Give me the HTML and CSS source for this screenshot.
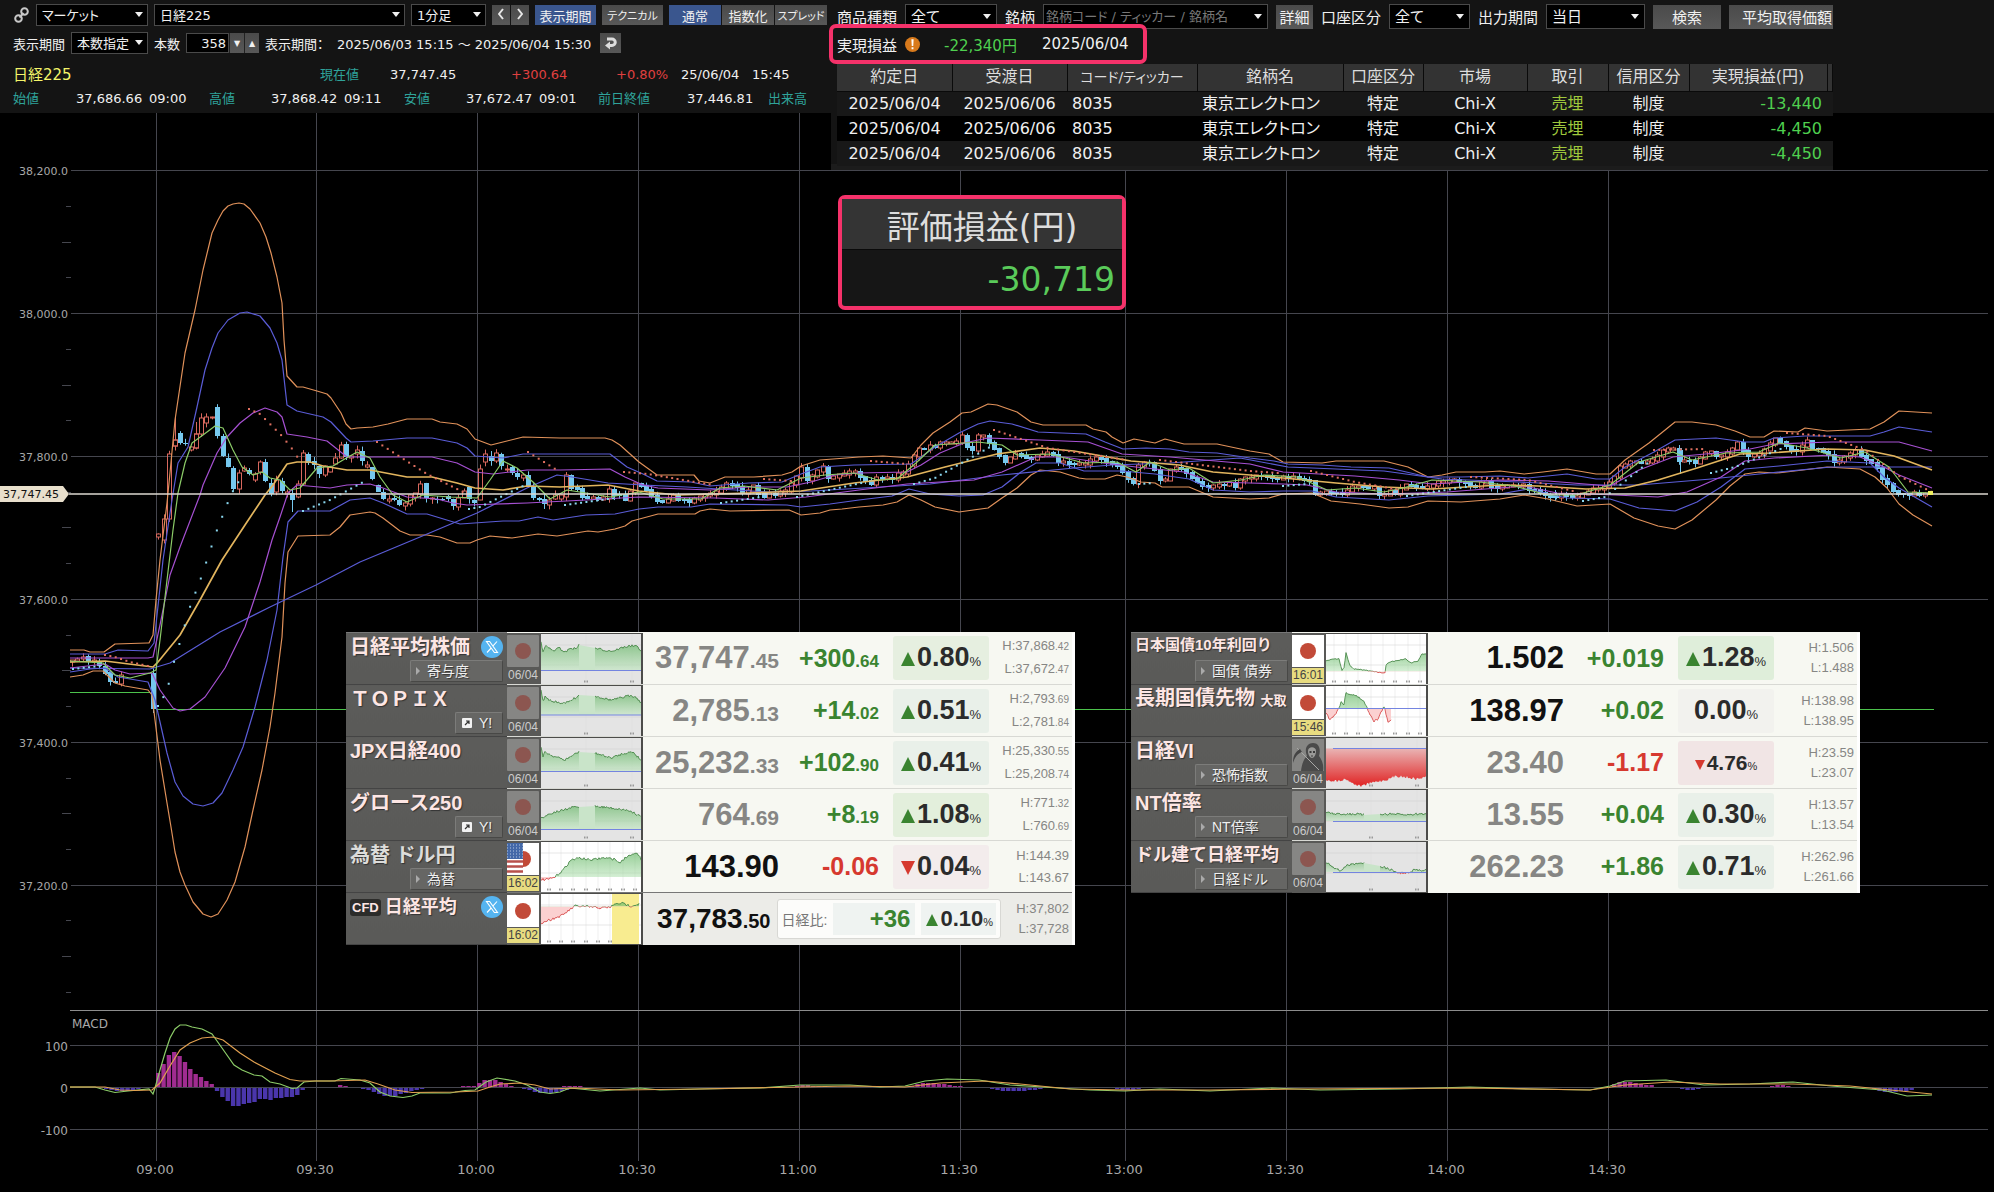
FILE: index.html
```html
<!DOCTYPE html>
<html lang="ja">

<head>
    <meta charset="UTF-8">
    <title>日経225</title>
    <link rel="stylesheet" href="styles.css">
</head>

<body>
    <header class="header">
        <form class="bar bar-top">
            <svg class="link-icon" viewBox="0 0 16 16">
                <circle cx="10.5" cy="4.5" r="3.3" />
                <circle cx="4.5" cy="11.5" r="3.3" />
                <path d="M9.5 6 L5.5 10.5" />
            </svg>
            <span class="pick pick-market"><select aria-label="種別"><option>マーケット</option></select></span>
            <span class="pick pick-symbol"><select aria-label="銘柄"><option>日経225</option></select></span>
            <span class="pick pick-foot"><select aria-label="足種"><option>1分足</option></select></span>
            <div class="group">
                <button type="button" class="btn btn-step" aria-label="前へ"><svg viewBox="0 0 6 12"><path d="M5 1 L1 6 L5 11" /></svg></button>
                <button type="button" class="btn btn-step" aria-label="次へ"><svg viewBox="0 0 6 12"><path d="M1 1 L5 6 L1 11" /></svg></button>
            </div>
            <button type="button" class="btn btn-wide active">表示期間</button>
            <button type="button" class="btn btn-wide kana">テクニカル</button>
            <div class="group">
                <button type="button" class="btn btn-tab active">通常</button>
                <button type="button" class="btn btn-tab">指数化</button>
                <button type="button" class="btn btn-tab kana">スプレッド</button>
            </div>
        </form>

        <form class="bar bar-period">
            <label for="mode">表示期間</label>
            <span class="pick pick-mode"><select id="mode"><option>本数指定</option></select></span>
            <label for="count">本数</label>
            <div class="group spin">
                <input type="text" id="count" value="358">
                <button type="button" class="btn" aria-label="減らす">▼</button>
                <button type="button" class="btn" aria-label="増やす">▲</button>
            </div>
            <span class="period-label">表示期間：</span>
            <span class="period">2025/06/03 15:15 ～ 2025/06/04 15:30</span>
            <button type="button" class="btn btn-reset" aria-label="戻す"><svg viewBox="0 0 14 14"><path d="M3 3 H8 A3.2 3.2 0 0 1 8 9.5 H5" /><path class="head" d="M6 5.5 V13.5 L1 9.5 Z" /></svg></button>
        </form>

        <div class="quote-now">
            <span class="symbol">日経225</span>
            <span class="label">現在値</span>
            <span>37,747.45</span>
            <span class="up">+300.64</span>
            <span class="up">+0.80%</span>
            <span>25/06/04</span>
            <span>15:45</span>
        </div>
        <div class="quote-day">
            <span class="label">始値</span>
            <span>37,686.66</span>
            <span>09:00</span>
            <span class="label">高値</span>
            <span>37,868.42</span>
            <span>09:11</span>
            <span class="label">安値</span>
            <span>37,672.47</span>
            <span>09:01</span>
            <span class="label">前日終値</span>
            <span>37,446.81</span>
            <span class="label">出来高</span>
        </div>
    </header>

    <section class="trades">
        <form class="filters">
            <label for="kind">商品種類</label>
            <span class="pick pick-kind"><select id="kind"><option>全て</option></select></span>
            <label for="code">銘柄</label>
            <span class="pick pick-code"><input type="text" id="code" placeholder="銘柄コード / ティッカー / 銘柄名"></span>
            <button type="button" class="btn btn-detail">詳細</button>
            <label for="account">口座区分</label>
            <span class="pick pick-account"><select id="account"><option>全て</option></select></span>
            <label for="range">出力期間</label>
            <span class="pick pick-range"><select id="range"><option>当日</option></select></span>
            <button type="button" class="btn btn-search">検索</button>
            <button type="button" class="btn btn-average">平均取得価額</button>
        </form>

        <div class="realized">
            <span>実現損益</span>
            <svg class="warn" viewBox="0 0 16 16">
                <circle cx="8" cy="8" r="8" fill="#d87a1c" />
                <path d="M6.8 2.5 H9.2 L8.8 9.5 H7.2 Z M7 11 H9 V13 H7 Z" fill="#fff" />
            </svg>
            <span class="minus">-22,340円</span>
            <span>2025/06/04</span>
        </div>

        <table class="deals">
            <colgroup>
                <col class="c-date"><col class="c-date"><col class="c-code"><col class="c-name"><col class="c-account"><col class="c-market"><col class="c-side"><col class="c-credit"><col class="c-profit"><col class="c-rest">
            </colgroup>
            <thead>
                <tr>
                    <th>約定日</th>
                    <th>受渡日</th>
                    <th class="kana">コード/ティッカー</th>
                    <th>銘柄名</th>
                    <th>口座区分</th>
                    <th>市場</th>
                    <th>取引</th>
                    <th>信用区分</th>
                    <th>実現損益(円)</th>
                    <th></th>
                </tr>
            </thead>
            <tbody>
                <tr>
                    <td>2025/06/04</td>
                    <td>2025/06/06</td>
                    <td class="code">8035</td>
                    <td class="name">東京エレクトロン</td>
                    <td>特定</td>
                    <td>Chi-X</td>
                    <td class="side">売埋</td>
                    <td>制度</td>
                    <td class="profit">-13,440</td>
                    <td></td>
                </tr>
                <tr>
                    <td>2025/06/04</td>
                    <td>2025/06/06</td>
                    <td class="code">8035</td>
                    <td class="name">東京エレクトロン</td>
                    <td>特定</td>
                    <td>Chi-X</td>
                    <td class="side">売埋</td>
                    <td>制度</td>
                    <td class="profit">-4,450</td>
                    <td></td>
                </tr>
                <tr>
                    <td>2025/06/04</td>
                    <td>2025/06/06</td>
                    <td class="code">8035</td>
                    <td class="name">東京エレクトロン</td>
                    <td>特定</td>
                    <td>Chi-X</td>
                    <td class="side">売埋</td>
                    <td>制度</td>
                    <td class="profit">-4,450</td>
                    <td></td>
                </tr>
            </tbody>
        </table>
    </section>

    <main class="chart">
        <svg id="chart" viewBox="0 113 1994 1079"></svg>

        <div class="valuation">
            <div class="valuation-title">評価損益(円)</div>
            <div class="valuation-value">-30,719</div>
        </div>

        <table class="board board-left">
            <colgroup>
                <col class="b-name"><col class="b-flag"><col class="b-spark"><col class="b-price"><col class="b-diff"><col class="b-rate"><col class="b-range">
            </colgroup>
            <tr>
                <th>
                    <div class="title"><span>日経平均株価</span><svg class="x-icon" viewBox="0 0 22 22"><use href="#x-mark" /></svg></div>
                    <a href="#" class="more">寄与度</a>
                </th>
                <td class="flag old"><svg viewBox="0 0 32 32"><use href="#jp-old" /></svg><span>06/04</span></td>
                <td class="spark"><svg data-spark="nikkei" viewBox="0 0 100 50"></svg></td>
                <td class="price old">37,747<small>.45</small></td>
                <td class="diff plus">+300<small>.64</small></td>
                <td class="rate"><span class="box g2"><i class="tri-up"></i>0.80<small>%</small></span></td>
                <td class="range">H:37,868<small>.42</small><br>L:37,672<small>.47</small></td>
            </tr>
            <tr>
                <th>
                    <div class="title"><span>ＴＯＰＩＸ</span></div>
                    <a href="#" class="more ext"><svg viewBox="0 0 10 10"><use href="#ext" /></svg>Y!</a>
                </th>
                <td class="flag old"><svg viewBox="0 0 32 32"><use href="#jp-old" /></svg><span>06/04</span></td>
                <td class="spark"><svg data-spark="topix" viewBox="0 0 100 50"></svg></td>
                <td class="price old">2,785<small>.13</small></td>
                <td class="diff plus">+14<small>.02</small></td>
                <td class="rate"><span class="box g1"><i class="tri-up"></i>0.51<small>%</small></span></td>
                <td class="range">H:2,793<small>.69</small><br>L:2,781<small>.84</small></td>
            </tr>
            <tr>
                <th>
                    <div class="title"><span>JPX日経400</span></div>
                </th>
                <td class="flag old"><svg viewBox="0 0 32 32"><use href="#jp-old" /></svg><span>06/04</span></td>
                <td class="spark"><svg data-spark="jpx" viewBox="0 0 100 50"></svg></td>
                <td class="price old">25,232<small>.33</small></td>
                <td class="diff plus">+102<small>.90</small></td>
                <td class="rate"><span class="box g1"><i class="tri-up"></i>0.41<small>%</small></span></td>
                <td class="range">H:25,330<small>.55</small><br>L:25,208<small>.74</small></td>
            </tr>
            <tr>
                <th>
                    <div class="title"><span>グロース250</span></div>
                    <a href="#" class="more ext"><svg viewBox="0 0 10 10"><use href="#ext" /></svg>Y!</a>
                </th>
                <td class="flag old"><svg viewBox="0 0 32 32"><use href="#jp-old" /></svg><span>06/04</span></td>
                <td class="spark"><svg data-spark="growth" viewBox="0 0 100 50"></svg></td>
                <td class="price old">764<small>.69</small></td>
                <td class="diff plus">+8<small>.19</small></td>
                <td class="rate"><span class="box g3"><i class="tri-up"></i>1.08<small>%</small></span></td>
                <td class="range">H:771<small>.32</small><br>L:760<small>.69</small></td>
            </tr>
            <tr class="split">
                <th>
                    <div class="title plain"><span>為替 ドル円</span></div>
                    <a href="#" class="more">為替</a>
                </th>
                <td class="flag live"><svg viewBox="0 0 32 32"><use href="#jp" /><use href="#us" /></svg><span>16:02</span></td>
                <td class="spark"><svg data-spark="usdjpy" viewBox="0 0 100 50"></svg></td>
                <td class="price">143.90</td>
                <td class="diff minus">-0.06</td>
                <td class="rate"><span class="box r1"><i class="tri-down"></i>0.04<small>%</small></span></td>
                <td class="range">H:144.39<br>L:143.67</td>
            </tr>
            <tr class="cfd">
                <th>
                    <div class="title mid"><b class="badge">CFD</b><span>日経平均</span><svg class="x-icon" viewBox="0 0 22 22"><use href="#x-mark" /></svg></div>
                </th>
                <td class="flag live"><svg viewBox="0 0 32 32"><use href="#jp" /></svg><span>16:02</span></td>
                <td class="spark"><svg data-spark="cfd" viewBox="0 0 100 50"></svg></td>
                <td colspan="3">
                    <div class="cfd-line">
                        <span class="price">37,783<small>.50</small></span>
                        <div class="compare">
                            <span class="compare-label">日経比:</span>
                            <span class="compare-diff">+36</span>
                            <span class="compare-rate"><i class="tri-up"></i>0.10<small>%</small></span>
                        </div>
                    </div>
                </td>
                <td class="range tight">H:37,802<br>L:37,728</td>
            </tr>
        </table>

        <table class="board board-right">
            <colgroup>
                <col class="b-name"><col class="b-flag"><col class="b-spark"><col class="b-price"><col class="b-diff"><col class="b-rate"><col class="b-range">
            </colgroup>
            <tr>
                <th>
                    <div class="title small"><span>日本国債10年利回り</span></div>
                    <a href="#" class="more">国債 債券</a>
                </th>
                <td class="flag live"><svg viewBox="0 0 32 32"><use href="#jp" /></svg><span>16:01</span></td>
                <td class="spark"><svg data-spark="jgb" viewBox="0 0 100 50"></svg></td>
                <td class="price">1.502</td>
                <td class="diff plus">+0.019</td>
                <td class="rate"><span class="box g4"><i class="tri-up"></i>1.28<small>%</small></span></td>
                <td class="range tight">H:1.506<br>L:1.488</td>
            </tr>
            <tr>
                <th>
                    <div class="title"><span>長期国債先物 <small>大取</small></span></div>
                </th>
                <td class="flag live"><svg viewBox="0 0 32 32"><use href="#jp" /></svg><span>15:46</span></td>
                <td class="spark"><svg data-spark="future" viewBox="0 0 100 50"></svg></td>
                <td class="price">138.97</td>
                <td class="diff plus">+0.02</td>
                <td class="rate"><span class="box">0.00<small>%</small></span></td>
                <td class="range tight">H:138.98<br>L:138.95</td>
            </tr>
            <tr>
                <th>
                    <div class="title"><span>日経VI</span></div>
                    <a href="#" class="more">恐怖指数</a>
                </th>
                <td class="flag old"><svg viewBox="0 0 32 32"><use href="#reaper" /></svg><span>06/04</span></td>
                <td class="spark"><svg data-spark="vi" viewBox="0 0 100 50"></svg></td>
                <td class="price old">23.40</td>
                <td class="diff minus">-1.17</td>
                <td class="rate"><span class="box r2 low"><i class="tri-down"></i>4.76<small>%</small></span></td>
                <td class="range tight">H:23.59<br>L:23.07</td>
            </tr>
            <tr>
                <th>
                    <div class="title"><span>NT倍率</span></div>
                    <a href="#" class="more">NT倍率</a>
                </th>
                <td class="flag old"><svg viewBox="0 0 32 32"><use href="#jp-old" /></svg><span>06/04</span></td>
                <td class="spark"><svg data-spark="nt" viewBox="0 0 100 50"></svg></td>
                <td class="price old">13.55</td>
                <td class="diff plus">+0.04</td>
                <td class="rate"><span class="box g1"><i class="tri-up"></i>0.30<small>%</small></span></td>
                <td class="range tight">H:13.57<br>L:13.54</td>
            </tr>
            <tr>
                <th>
                    <div class="title mid"><span>ドル建て日経平均</span></div>
                    <a href="#" class="more">日経ドル</a>
                </th>
                <td class="flag old"><svg viewBox="0 0 32 32"><use href="#jp-old" /></svg><span>06/04</span></td>
                <td class="spark"><svg data-spark="dollar" viewBox="0 0 100 50"></svg></td>
                <td class="price old">262.23</td>
                <td class="diff plus">+1.86</td>
                <td class="rate"><span class="box g1"><i class="tri-up"></i>0.71<small>%</small></span></td>
                <td class="range tight">H:262.96<br>L:261.66</td>
            </tr>
        </table>
    </main>

    <svg class="symbols">
        <defs>
            <linearGradient id="fill-up" x1="0" y1="0" x2="0" y2="1">
                <stop offset="0" stop-color="#5fb45f" stop-opacity="0.8" />
                <stop offset="1" stop-color="#bfe8bf" stop-opacity="0.7" />
            </linearGradient>
            <linearGradient id="fill-vi" x1="0" y1="0" x2="0" y2="1">
                <stop offset="0" stop-color="#e9b4b4" />
                <stop offset="1" stop-color="#e02020" />
            </linearGradient>
            <symbol id="jp" viewBox="0 0 32 32">
                <rect width="32" height="32" fill="#fff" />
                <circle cx="16" cy="16" r="8" fill="#c24a38" />
            </symbol>
            <symbol id="jp-old" viewBox="0 0 32 32">
                <rect width="32" height="32" rx="1" fill="#868684" />
                <circle cx="16" cy="16" r="8" fill="#8c5650" />
            </symbol>
            <symbol id="us" viewBox="0 0 32 32">
                <rect width="16" height="32" fill="#fff" />
                <path d="M0 18.5 H16 M0 23.5 H16 M0 28.5 H16" stroke="#b8504c" stroke-width="2.5" />
                <rect width="16" height="16" fill="#4368a8" />
                <path d="M0 2 H16 M0 5 H16 M0 8 H16 M0 11 H16 M0 14 H16" stroke="#b8c8e0" stroke-width="1" stroke-dasharray="1 2" />
            </symbol>
            <symbol id="reaper" viewBox="0 0 32 32">
                <rect width="32" height="32" fill="#868684" />
                <path d="M9 32 C10 24 12 20 15 17 C12 10 15 4 21 4 C27 4 29 10 27 17 C30 21 32 26 31 32 Z" fill="#4a4a4a" />
                <path d="M16 12 C16 7 24 7 24 12 C24 16 22 19 20 19 C18 19 16 16 16 12 Z" fill="#9a9a98" />
                <path d="M17.5 12 h2 v2 h-2 z M21 12 h2 v2 h-2 z M19 16.5 h2 v1 h-2 z" fill="#3a3a3a" />
                <path d="M5 9 L27 31" stroke="#a8a8a6" stroke-width="1" />
                <path d="M8 10 C3 13 1 17 1 24 C3 18 5 15 10 13 Z" fill="#444" />
            </symbol>
            <symbol id="x-mark" viewBox="0 0 22 22">
                <circle cx="11" cy="11" r="11" fill="#55b4f0" />
                <path d="M5.5 5.5 H8.6 L16.5 16.5 H13.4 Z M16 5.5 L11.8 10.2 M10.2 12 L6 16.5" fill="none" stroke="#fff" stroke-width="1.1" />
            </symbol>
            <symbol id="ext" viewBox="0 0 10 10">
                <rect width="10" height="10" rx="1" fill="#f2f2f2" />
                <path d="M3 7 L7 3 M4 3 H7 V6" fill="none" stroke="#333" stroke-width="1.2" />
            </symbol>
        </defs>
    </svg>

    <script src="script.js"></script>
</body>

</html>
```

FILE: styles.css
```css
* {
    box-sizing: border-box;
}

body {
    margin: 0;
    background-color: #000;
    color: #f0f0f0;
    font-family: "DejaVu Sans", "Noto Sans CJK JP", sans-serif;
    font-size: 13px;
    font-feature-settings: "palt";
    position: relative;
    overflow-x: hidden;
}

button,
input,
select {
    font: inherit;
    font-feature-settings: inherit;
    color: inherit;
    margin: 0;
    padding: 0;
    border: 0;
    border-radius: 0;
    outline: none;
}

.symbols {
    position: absolute;
    width: 0;
    height: 0;
}

/* header */

.header {
    background-color: #141414;
    padding: 4px 0 2px;
}

.bar {
    display: flex;
    align-items: center;
    gap: 6px;
    height: 22px;
    white-space: nowrap;
}

.bar-top {
    padding-left: 14px;
    margin-bottom: 6px;
}

.bar-period {
    padding-left: 13px;
    margin-bottom: 9px;
}

.link-icon {
    width: 16px;
    height: 16px;
    fill: none;
    stroke: #c8c8c8;
    stroke-width: 2;
}

.pick {
    position: relative;
    display: block;
    height: 22px;
}

.pick select,
.pick input {
    display: block;
    width: 100%;
    height: 100%;
    appearance: none;
    background-color: #000;
    border: 1px solid #4a4a4a;
    padding-left: 5px;
}

.pick::after {
    content: "";
    position: absolute;
    right: 5px;
    top: 50%;
    margin-top: -3px;
    border: 4px solid transparent;
    border-top: 5px solid #f0f0f0;
    border-bottom: 0;
}

.pick-market { width: 112px; }
.pick-symbol { width: 251px; }
.pick-foot { width: 75px; }
.pick-mode { width: 77px; }

.group {
    display: flex;
    gap: 1px;
}

.btn {
    height: 20px;
    background: linear-gradient(#4a4a4a, #585858);
    text-align: center;
    white-space: nowrap;
}

.btn.active {
    background: #3a568e;
}

.btn.kana {
    font-size: 11px;
}

.btn-step {
    width: 18px;
}

.btn-step svg {
    width: 6px;
    height: 12px;
    fill: none;
    stroke: #e8e8e8;
    stroke-width: 2;
}

.btn-wide { width: 61px; }
.btn-tab { width: 52px; }

.spin {
    gap: 0;
}

.spin input {
    width: 43px;
    height: 20px;
    background-color: #000;
    border: 1px solid #4a4a4a;
    text-align: right;
    padding-right: 2px;
}

.spin .btn {
    width: 15px;
    font-size: 8px;
    border-left: 1px solid #222;
}

.period-label {
    width: 66px;
}

.period {
    width: 257px;
}

.btn-reset {
    width: 21px;
}

.btn-reset svg {
    width: 14px;
    height: 14px;
    display: block;
    margin: 0 auto;
    fill: none;
    stroke: #ddd;
    stroke-width: 3;
}

.btn-reset .head {
    fill: #ddd;
    stroke: none;
}

.quote-now,
.quote-day {
    display: grid;
    padding-left: 13px;
    height: 24px;
    line-height: 24px;
    white-space: nowrap;
}

.quote-now {
    grid-template-columns: 307px 70px 121px 105px 65px 71px 1fr;
}

.quote-day {
    grid-template-columns: 63px 73px 60px 62px 73px 60px 62px 73px 59px 89px 81px 1fr;
}

.symbol {
    color: #f5f56a;
    font-size: 15px;
}

.label {
    color: #2fa39a;
}

.up {
    color: #e04040;
}

/* realized trades */

.trades {
    position: absolute;
    left: 831px;
    top: 0;
    z-index: 1;
    width: 1002px;
    height: 170px;
    background-color: #1c1c1c;
    background-image: linear-gradient(#141414, #141414);
    background-size: 100% 164px;
    background-repeat: no-repeat;
    padding: 4px 0 0 6px;
    font-size: 15px;
}

.filters {
    display: flex;
    align-items: center;
    gap: 8px;
    height: 25px;
    overflow: hidden;
    white-space: nowrap;
}

.filters label {
    flex: none;
}

.filters .pick {
    height: 25px;
    flex: none;
}

.filters .pick::after {
    right: 6px;
}

.filters .btn {
    height: 24px;
    flex: none;
}

.filters input::placeholder {
    color: #777;
    opacity: 1;
}

.filters .pick-code input {
    padding-left: 2px;
    font-size: 13px;
}

.pick-kind { width: 92px; }
.pick-code { width: 225px; }
.pick-account { width: 81px; }
.pick-range { width: 99px; }
.btn-detail { width: 37px; }
.btn-search { width: 68px; }

.filters .btn-average {
    width: 116px;
}

.realized {
    position: relative;
    z-index: 2;
    display: flex;
    align-items: center;
    width: 318px;
    height: 40px;
    margin: -5px 0 0 -8px;
    padding-left: 4px;
    border: 4px solid #f5326a;
    border-radius: 7px;
    background-color: #141414;
    white-space: nowrap;
}

.warn {
    width: 15px;
    height: 15px;
    margin: 0 24px 0 8px;
}

.realized .minus {
    width: 98px;
}

.minus,
.profit {
    color: #4fd04f;
}

.deals {
    table-layout: fixed;
    width: 100%;
    border-collapse: collapse;
    font-size: 16px;
    line-height: 24px;
    white-space: nowrap;
}

.c-date { width: 115px; }
.c-code { width: 130px; }
.c-name { width: 146px; }
.c-account { width: 80px; }
.c-market { width: 104px; }
.c-side { width: 81px; }
.c-credit { width: 81px; }
.c-profit { width: 138px; }

.deals th {
    height: 27px;
    padding: 0;
    font-weight: normal;
    color: #ddd;
    background-color: #333;
    border-right: 1px solid #0a0a0a;
    border-bottom: 1px solid #0a0a0a;
}

.deals .kana {
    font-size: 14px;
}

.deals td {
    height: 25px;
    padding: 0;
    text-align: center;
    background-color: #181818;
}

.deals tr:nth-child(2) td {
    background-color: #000;
}

.deals .code,
.deals .name {
    text-align: left;
    padding-left: 5px;
}

.deals .side {
    color: #9fc83c;
}

.deals .profit {
    text-align: right;
    padding-right: 5px;
}

/* chart */

.chart {
    position: relative;
}

#chart {
    display: block;
    width: 100%;
}

#chart text {
    fill: #a8a8a8;
    font-size: 11px;
}

#chart .axis-macd {
    font-size: 12px;
}

#chart .axis-time {
    font-size: 13px;
}

#chart .tag-text {
    fill: #111;
}

.grid {
    stroke: #45464e;
    shape-rendering: crispEdges;
}

.valuation {
    position: absolute;
    left: 838px;
    top: 82px;
    width: 288px;
    border: 4px solid #f5326a;
    border-radius: 7px;
    background-color: #161616;
    font-size: 33px;
    line-height: 40px;
}

.valuation-title {
    padding: 9px 0 1px;
    text-align: center;
    color: #ddd;
    background-color: #343434;
    border-bottom: 1px solid #0a0a0a;
}

.valuation-value {
    padding: 10px 7px 6px;
    text-align: right;
    color: #5acb5a;
}

/* quote boards */

.board {
    position: absolute;
    top: 519px;
    width: 729px;
    table-layout: fixed;
    border-collapse: collapse;
    background-color: #f7f8f2;
    border-right: 3px solid #fff;
    font-family: "Liberation Sans", "Noto Sans CJK JP", sans-serif;
    font-feature-settings: normal;
    color: #111;
    white-space: nowrap;
}

.board-left { left: 346px; }
.board-right { left: 1131px; }

.b-name { width: 161px; }
.b-flag { width: 34px; }
.b-spark { width: 102px; }
.b-price { width: 140px; }
.b-diff { width: 100px; }
.b-rate { width: 118px; }

.board tr {
    height: 52px;
    border-bottom: 1px solid #d8d9d4;
}

.board .split {
    border-top: 1px solid #777;
    border-bottom: 1px solid #777;
}

.board tr:last-child {
    border-bottom: 0;
}

.board td {
    height: 52px;
    padding: 0;
    text-align: right;
}

.board th {
    height: 52px;
    padding: 1px 4px 0 4px;
    vertical-align: top;
    text-align: left;
    background: linear-gradient(#5c5c5a, #5a5a58);
    border-top: 1px solid #777;
    border-bottom: 1px solid #444;
}

.board tr:last-child th,
.board tr:last-child td {
    height: 51px;
}

.title {
    display: flex;
    justify-content: space-between;
    align-items: center;
    height: 26px;
    font-size: 20px;
    line-height: 28px;
    color: #fde6e4;
    text-shadow: 1px 1px 1px #333;
}

.title.plain { color: #dcdcda; }
.title.mid { font-size: 18px; }
.title.small { font-size: 15px; height: 22px; }

.title small {
    font-size: 13px;
}

.badge {
    padding: 0 2px;
    border-radius: 3px;
    background-color: #2c2c2a;
    font-size: 13px;
    line-height: 17px;
}

.x-icon {
    width: 22px;
    height: 22px;
}

.cfd .title span {
    flex: 1;
    padding-left: 4px;
}

.more {
    display: flex;
    align-items: center;
    width: 93px;
    height: 22px;
    margin-left: auto;
    padding-left: 5px;
    border: 1px solid #7c7c7a;
    border-bottom-color: #484846;
    border-right-color: #484846;
    border-radius: 2px;
    background-color: #666664;
    color: #f0f0f0;
    font-size: 14px;
    font-weight: normal;
    line-height: 20px;
    text-decoration: none;
    text-shadow: 1px 1px 1px #333;
}

.more::before {
    content: "";
    margin-right: 7px;
    border: 4px solid transparent;
    border-left: 4px solid #aaa;
    border-right: 0;
}

.title.small + .more {
    margin-top: 4px;
}

.more.ext {
    width: 48px;
    padding-left: 6px;
}

.more.ext::before {
    display: none;
}

.more.ext svg {
    width: 10px;
    height: 10px;
    margin-right: 7px;
}

.board .flag,
.board .spark {
    background-color: #4c4c4a;
    vertical-align: top;
}

.board .flag {
    padding: 2px 2px 0 0;
    text-align: center;
    background-color: #595957;
    font-size: 12px;
    color: #ccc;
}

.flag svg {
    display: block;
    width: 32px;
    height: 32px;
}

.flag span {
    display: block;
    height: 16px;
    line-height: 16px;
}

.flag.live span {
    background-color: #e8dc80;
    color: #444;
    margin-top: 1px;
    height: 15px;
    line-height: 15px;
}

.board .spark {
    padding-top: 1px;
}

.spark svg {
    display: block;
    width: 100px;
    height: 50px;
}

.price {
    font-size: 31px;
    font-weight: bold;
}

.board td.price,
.board td.diff {
    padding-right: 4px;
}

.price small { font-size: 21px; }
.price.old { color: #868684; }

.diff {
    font-size: 25px;
    font-weight: bold;
}

.diff small { font-size: 17px; }
.plus { color: #3a8430; }
.board .minus { color: #d6392f; }

.box {
    display: flex;
    justify-content: center;
    align-items: baseline;
    width: 96px;
    height: 44px;
    margin-left: 10px;
    border-radius: 3px;
    background-color: #f2f2ee;
    color: #2b2b2b;
    font-size: 27px;
    font-weight: bold;
    line-height: 42px;
}

.box small {
    font-size: 13px;
    font-weight: normal;
}

.box.low { font-size: 21px; line-height: 44px; }
.box.low small { font-size: 11px; }

.g1 { background-color: #e9f0e9; }
.g2 { background-color: #e6efe0; }
.g3 { background-color: #e3efdc; }
.g4 { background-color: #dfeeda; }
.r1 { background-color: #f3ecec; }
.r2 { background-color: #f1e5e5; }

.tri-up,
.tri-down {
    margin-right: 2px;
    border: 7px solid transparent;
}

.tri-up {
    border-top: 0;
    border-bottom: 14px solid #3a8430;
}

.tri-down {
    border-bottom: 0;
    border-top: 14px solid #d6392f;
}

.low .tri-down {
    border-width: 10px 5px 0;
}

.board .range {
    padding-right: 3px;
    font-size: 13px;
    line-height: 22px;
    color: #868684;
}

.board .range.tight {
    line-height: 20px;
}

.range small {
    font-size: 10px;
}

.cfd {
    background-color: #ecece8;
}

.cfd .price { font-size: 28px; }
.cfd .price small { font-size: 20px; }

.cfd-line {
    display: flex;
    justify-content: flex-end;
    align-items: center;
    gap: 6px;
}

.compare {
    display: flex;
    align-items: center;
    gap: 6px;
    height: 40px;
    padding: 0 4px;
    border: 1px solid #d8d8d4;
    border-radius: 3px;
    background-color: #fcfcfa;
}

.compare-label {
    font-size: 14px;
    color: #777;
}

.compare-diff,
.compare-rate {
    height: 32px;
    line-height: 32px;
    background-color: #eff3f1;
    font-weight: bold;
}

.compare-diff {
    width: 82px;
    padding-right: 5px;
    font-size: 24px;
    color: #3a8430;
}

.compare-rate {
    display: flex;
    align-items: baseline;
    padding: 0 3px 0 5px;
    font-size: 22px;
    color: #2b2b2b;
}

.compare-rate small {
    font-size: 11px;
    font-weight: normal;
}

.compare-rate .tri-up {
    border-width: 0 6px 12px;
}
```

FILE: script.js
```js
const NS = 'http://www.w3.org/2000/svg';
const STEP = 5.35;

function add(parent, tag, attrs, text) {
    const el = document.createElementNS(NS, tag);
    for (const key in attrs) {
        el.setAttribute(key, attrs[key]);
    }
    if (text) {
        el.textContent = text;
    }
    parent.appendChild(el);
    return el;
}

function parse(str) {
    return str.trim().split(/\s+/).map(p => p.split(',').map(Number));
}

// y on the polyline at the given x
function at(points, x) {
    for (let i = 1; i < points.length; i++) {
        const [x0, y0] = points[i - 1];
        const [x1, y1] = points[i];
        if (x <= x1) {
            return y0 + (y1 - y0) * (x - x0) / (x1 - x0);
        }
    }
    return points[points.length - 1][1];
}

// the same sequence on every load
let seed = 7;
function rnd() {
    seed = (seed * 16807) % 2147483647;
    return seed / 2147483647;
}

const lines = [
    ['#e0915a', `70,650 84,650 90,652 104,652 115,644 147,643 149,643 153,635 156,600 160,560 167,503 170,473 175,420 185,353 195,310 203,270 212,233 218,220 223,211 228,206 233,204 239,203 244,204 250,209 260,223 266,237 271,253 277,277 282,303 284,340 287,376 297,387 303,387 317,391 327,394 331,398 341,413 346,424 351,429 357,428 373,427 388,424 407,419 432,419 440,422 457,424 467,429 475,439 491,445 503,442 523,437 560,438 605,438 612,440 620,445 639,462 657,475 694,475 699,481 710,483 725,477 754,477 782,475 792,472 801,466 820,460 859,457 883,456 911,458 921,445 933,433 950,422 962,413 971,412 988,404 997,405 1017,412 1031,422 1043,425 1086,425 1093,429 1106,432 1112,437 1123,443 1134,439 1155,443 1165,439 1184,444 1217,444 1250,451 1269,454 1283,462 1322,463 1336,461 1384,461 1408,467 1428,477 1442,475 1456,472 1485,472 1500,471 1524,474 1543,472 1567,469 1596,474 1610,474 1625,460 1649,443 1675,422 1692,422 1716,425 1735,431 1750,437 1764,437 1774,431 1798,432 1805,428 1827,431 1870,429 1884,422 1899,411 1932,413`],
    ['#e0915a', `70,677 83,675 93,671 103,671 115,683 125,686 148,690 152,695 155,720 160,760 167,803 171,827 175,852 180,872 185,885 193,902 203,914 211,917 218,914 227,900 235,882 245,847 253,810 262,770 270,727 275,693 282,637 285,583 288,552 298,536 330,535 340,527 350,515 370,512 375,513 383,518 400,531 410,535 427,535 440,537 457,543 470,543 477,540 490,536 512,538 538,534 557,536 588,531 598,532 615,529 625,526 632,521 658,514 695,514 700,511 710,509 730,511 789,510 801,515 820,513 830,510 842,509 859,507 883,505 897,502 909,495 921,500 935,507 959,512 988,508 1002,498 1017,488 1031,475 1040,470 1060,472 1079,478 1086,479 1105,479 1117,475 1127,477 1141,482 1155,483 1162,487 1189,487 1213,497 1250,499 1269,498 1283,494 1312,493 1331,501 1360,504 1389,508 1408,507 1428,501 1461,502 1500,499 1524,495 1548,499 1577,506 1610,504 1634,518 1658,526 1675,529 1692,520 1716,500 1730,486 1745,474 1759,472 1776,473 1803,470 1827,467 1860,469 1875,477 1887,488 1899,504 1913,515 1932,526`],
    ['#5a5cd6', `70,654 105,654 118,650 148,651 154,643 163,560 172,500 178,463 188,447 197,407 205,370 212,348 218,333 228,320 240,313 247,312 260,316 270,328 277,343 282,360 287,405 297,411 323,417 331,422 346,438 351,442 373,441 407,438 432,438 457,443 467,448 475,456 503,458 523,454 560,454 610,454 627,467 643,474 657,481 691,482 710,486 749,483 782,482 801,474 820,467 854,465 911,464 921,457 935,447 959,433 978,424 990,421 1012,424 1038,432 1086,434 1105,442 1123,449 1146,448 1170,449 1189,452 1217,453 1250,458 1274,461 1288,464 1322,465 1351,467 1389,468 1428,477 1461,477 1500,476 1528,478 1567,474 1596,479 1610,479 1625,467 1654,452 1675,440 1716,438 1745,442 1764,442 1774,438 1805,436 1870,436 1884,432 1899,427 1932,432`],
    ['#5a5cd6', `70,672 90,669 105,668 118,677 148,682 155,700 160,722 167,753 175,782 183,796 193,804 203,806 213,803 222,793 233,770 243,747 255,707 267,660 277,610 283,557 288,522 298,511 330,511 350,500 370,498 383,503 407,514 427,514 460,524 503,521 519,521 538,517 553,520 586,515 615,514 639,509 658,507 691,507 710,504 787,505 801,507 830,504 859,500 892,496 909,489 930,494 959,496 983,495 1002,487 1021,472 1036,463 1060,463 1084,471 1122,471 1155,474 1189,479 1213,490 1250,492 1283,491 1312,491 1336,497 1389,500 1428,496 1500,494 1528,489 1567,498 1610,499 1639,508 1675,511 1697,502 1721,487 1745,469 1779,466 1827,461 1870,463 1884,477 1899,488 1932,507`],
    ['#5a5cd6', `70,668 150,669 170,663 220,632 270,607 316,585 360,562 420,537 477,513 527,488 557,475 572,477 608,483 643,485 687,487 768,492 811,491 864,488 930,484 1002,475 1074,468 1112,465 1170,463 1240,458 1288,467 1384,471 1442,479 1519,482 1577,485 1639,485 1711,479 1769,473 1831,467 1932,467`],
    ['#a650d2', `70,658 148,658 153,657 160,625 170,575 180,547 200,495 203,485 217,453 227,437 240,423 253,413 265,408 277,412 282,417 287,434 307,437 327,441 347,457 432,457 457,463 475,472 493,474 527,470 560,470 610,469 625,477 643,485 658,488 710,490 749,487 787,487 811,482 835,475 859,473 907,472 921,465 940,453 964,443 988,438 1040,440 1088,442 1122,454 1170,457 1250,464 1283,472 1355,476 1399,480 1432,484 1500,480 1548,481 1610,486 1639,470 1673,457 1716,453 1750,449 1774,444 1831,442 1899,442 1932,451`],
    ['#a650d2', `70,668 105,664 115,670 130,674 152,673 160,690 173,708 180,711 190,709 205,697 225,668 245,627 260,582 272,540 280,517 288,493 297,485 330,488 347,485 370,484 383,488 407,497 437,499 453,503 467,505 527,503 586,500 639,497 715,498 768,500 806,497 859,490 907,484 940,482 974,480 1002,472 1036,457 1064,457 1103,463 1136,467 1184,472 1213,482 1250,483 1283,484 1307,485 1336,492 1384,494 1447,492 1524,486 1557,493 1615,495 1658,497 1687,492 1721,477 1745,461 1774,458 1831,455 1860,457 1880,465 1899,475 1932,488`],
    ['#e2b55e', `70,662 105,661 153,667 158,662 180,635 200,600 222,560 245,525 265,495 273,485 287,464 297,462 310,462 323,466 347,470 370,470 407,477 432,477 457,483 475,488 503,490 527,486 560,487 608,485 639,491 677,495 749,493 801,491 854,483 907,477 945,467 997,454 1040,448 1074,451 1131,461 1179,465 1213,472 1250,475 1283,478 1336,483 1384,487 1432,489 1500,485 1538,486 1586,489 1625,488 1658,480 1697,468 1740,454 1769,453 1827,449 1865,450 1894,456 1932,470`, 1.7],
    ['#8ccc68', `70,661 103,663 115,675 130,678 150,673 156,670 160,640 167,580 173,530 178,493 185,463 192,443 203,435 215,426 223,428 233,450 242,467 253,475 262,472 270,478 280,480 290,490 300,488 317,468 333,466 343,460 357,452 370,458 380,477 393,495 407,502 423,495 450,497 477,498 490,480 503,461 517,468 533,482 550,499 567,490 586,493 610,497 639,492 663,499 701,499 720,488 744,486 777,490 801,478 825,475 854,473 878,480 897,479 916,463 935,445 978,442 1002,445 1017,455 1050,454 1084,463 1117,462 1136,472 1150,462 1170,470 1189,468 1213,483 1241,480 1264,475 1298,477 1327,490 1355,488 1384,492 1403,488 1432,480 1480,482 1514,486 1548,495 1577,495 1610,485 1639,462 1673,452 1692,460 1726,453 1759,452 1779,443 1807,448 1841,458 1865,452 1889,467 1908,492 1932,493`]
];

// x, body top, body bottom, 1 = up
const opening = parse(`72,660,662,1 77,659,661,1 83,657,659,1 88,656,661,0 94,660,662,1 99,662,666,0 105,666,674,0 110,672,682,0 115,681,683,0 121,675,684,1 153,673,709,0 158,534,537,1 164,519,540,1 169,454,519,1 175,440,446,1 180,433,443,0 185,443,444,0 191,447,450,1 196,434,448,1 201,418,434,1 206,417,423,1 212,417,418,1 217,407,436,0 223,436,456,0 228,458,467,0 233,468,489,0 239,473,489,1 244,468,471,1 249,470,474,0 255,474,480,1 260,462,472,1 265,462,481,0 271,483,494,0 276,480,492,1 282,481,491,0 287,492,494,1 292,493,500,0 298,484,497,1 303,453,484,1 308,454,463,0 314,461,465,0 319,466,474,0 325,466,475,1 330,467,472,1 335,458,464,1 341,445,458,1 346,444,457,0 351,456,458,1 357,450,454,1 362,451,461,0 367,465,467,1 372,467,479,0 378,485,492,0 383,492,499,0 389,499,501,1 394,498,500,0 399,500,505,0 405,503,506,1 410,495,504,1 415,493,497,1 420,484,494,1 426,483,498,0 432,498,499,1 437,499,500,0 442,499,500,0 448,496,499,0 453,499,506,0 458,498,507,1 464,491,498,1 469,487,499,0 474,500,503,0 480,469,500,1 485,454,462,1 491,456,461,0 496,453,461,1 501,454,466,0 507,469,470,1 512,467,473,0 517,473,477,0 523,475,478,1 528,475,486,0 533,487,498,0 539,498,500,0 544,499,504,0 549,500,505,1 555,495,499,1`);

const closes = parse(`555,495 560,497 565,473 571,487 576,488 581,495 588,498 603,497 609,488 614,493 622,497 628,500 631,488 639,482 646,490 658,501 665,501 672,493 678,500 691,501 706,495 720,487 727,483 739,486 744,493 754,485 761,495 777,492 787,488 794,480 801,467 807,480 823,467 828,478 840,473 856,471 864,480 871,484 878,475 890,479 904,470 914,453 921,447 945,443 957,442 963,432 968,448 974,447 979,431 984,437 993,447 1000,458 1007,463 1014,452 1031,457 1050,450 1057,460 1081,464 1093,458 1115,463 1122,470 1129,480 1134,482 1139,462 1150,462 1158,477 1162,483 1172,467 1184,470 1194,480 1206,486 1222,482 1237,485 1241,477 1250,476 1269,475 1278,478 1286,475 1298,477 1310,482 1315,492 1341,492 1353,486 1367,488 1375,485 1379,493 1396,491 1406,483 1418,487 1447,480 1461,480 1471,486 1485,482 1497,487 1524,485 1531,489 1553,497 1561,493 1572,497 1596,487 1610,483 1620,467 1634,460 1649,463 1658,453 1673,447 1678,461 1697,461 1706,452 1723,455 1740,440 1744,455 1757,453 1769,445 1772,436 1783,443 1791,450 1800,450 1804,436 1812,448 1824,451 1834,460 1843,459 1855,449 1865,460 1875,465 1880,475 1889,487 1896,493 1932,493`);

const sar = [
    [0, '158,706 163,698 169,683 174,662 180,642 190,607 201,578 217,530 228,502 233,491 239,481'],
    [1, '249,409 260,414 271,425 282,436 293,450 298,458'],
    [0, '303,511 330,500 367,480'],
    [1, '377,442 405,460 427,474 463,492'],
    [0, '469,509 480,507 523,486'],
    [1, '528,452 560,472'],
    [0, '565,505 615,498'],
    [1, '624,472 648,474 713,485'],
    [0, '721,503 761,497'],
    [1, '764,479 791,481'],
    [0, '797,497 866,482'],
    [1, '871,461 907,464'],
    [0, '914,484 935,478 990,447'],
    [1, '994,430 1048,448 1127,460'],
    [0, '1139,484 1155,483'],
    [1, '1160,460 1250,471 1278,473'],
    [0, '1283,486 1307,484'],
    [1, '1311,471 1355,482 1401,490'],
    [0, '1407,496 1466,487'],
    [1, '1471,477 1528,480 1577,492'],
    [0, '1583,501 1605,497 1649,462'],
    [1, '1654,450 1706,449'],
    [0, '1711,473 1735,467 1783,448'],
    [1, '1787,433 1827,436 1865,450 1899,476 1932,492'],
    [1, '105,655 115,657 130,662 148,666'],
    [0, '73,669 100,666']
];

const macd = '70,1087 95,1087 105,1090 115,1092.5 128,1091 149,1089 153,1094 155,1088 160,1070 165,1053 170,1038 175,1029 180,1025 186,1025 192,1027 202,1029 212,1034 222,1048 234,1065 242,1070 254,1075 262,1076 270,1082 280,1084 292,1088.5 297,1088 304,1082 315,1081 335,1081 341,1078.5 360,1080 370,1083 380,1092 390,1096 403,1097.5 412,1096 420,1093 450,1093 465,1090.5 475,1090 486,1082 497,1078 515,1081 527,1085 540,1092 550,1093.5 560,1092 570,1088 600,1091 640,1088 660,1090 700,1089 760,1088 800,1085 850,1085 880,1087 905,1086 925,1081 947,1079 979,1080 1010,1085 1043,1087 1090,1090 1125,1091 1160,1089 1210,1091 1272,1088 1320,1090 1400,1089 1470,1087 1530,1089 1590,1090 1610,1086 1625,1081 1666,1080 1704,1085 1750,1084 1793,1082 1831,1086 1882,1090 1907,1096 1932,1095';
const signal = '70,1087 105,1087 120,1090 135,1090.5 152,1090 160,1083 170,1066 180,1050 190,1043 202,1038 213,1037 223,1040 240,1053 254,1062 275,1073 290,1079.5 300,1081 330,1081 365,1080 378,1084 395,1090 412,1092.5 455,1092 478,1091 490,1087 500,1084 520,1083 535,1085 550,1089 575,1088 620,1090 700,1089 800,1087 850,1086 905,1087 940,1083 985,1081 1020,1084 1070,1089 1125,1090 1210,1090 1300,1089 1470,1088 1590,1090 1625,1085 1670,1082 1720,1084 1793,1084 1850,1086 1890,1090 1932,1094';

const bars = [
    [104, [-1, -2, -3, -3, -3, -2, -1]],
    [156, [14, 23, 32, 35, 31, 25, 18, 13, 10, 6, 3, -3, -9, -13, -18, -18, -16, -15, -14, -11, -11, -12, -10, -10, -9, -9, -7, -2]],
    [338, [2, 1]],
    [361, [-1, -2, -4, -6, -8, -8, -8, -6, -5, -3, -2, -1]],
    [461, [1, 1, 1, 4, 7, 7, 7, 5, 3, 1]],
    [522, [-1, -2, -4, -5, -5, -5, -4, -3, -2]],
    [562, [1, 1, 1, 1]],
    [795, [1, 2, 2, 1, 1]],
    [910, [1, 3, 4, 4, 4, 3, 3, 2, 1, 1]],
    [990, [-1, -2, -3, -3, -3, -3, -3, -2, -2, -1]],
    [1115, [-1, -2, -2, -2, -1]],
    [1612, [3, 5, 5, 5, 4, 3, 2, 2]],
    [1680, [-1, -2, -2, -1]],
    [1770, [1, 2, 2, 1]],
    [1872, [-1, -3, -4, -4, -4, -3, -3, -2]]
];

const times = [[156, '09:00'], [316, '09:30'], [477, '10:00'], [638, '10:30'], [799, '11:00'], [960, '11:30'], [1125, '13:00'], [1286, '13:30'], [1447, '14:00'], [1608, '14:30']];

function candle(svg, x, top, bottom, up, high, low) {
    const color = up ? '#d8685e' : '#76c8ee';
    const h = Math.max(1, bottom - top);
    if (high < top) {
        add(svg, 'path', { d: `M${x} ${high}V${top}`, stroke: color });
    }
    if (low > bottom) {
        add(svg, 'path', { d: `M${x} ${bottom}V${low}`, stroke: color });
    }
    if (up) {
        add(svg, 'rect', { x: x - 2, y: top, width: 4, height: h, fill: 'none', stroke: color });
    } else {
        add(svg, 'rect', { x: x - 2.5, y: top, width: 5, height: h, fill: color });
    }
}

function drawChart() {
    const svg = document.getElementById('chart');
    const grid = add(svg, 'g', { class: 'grid' });

    times.forEach(([x, label]) => {
        add(grid, 'path', { d: `M${x + 0.5} 113V1161` });
        add(svg, 'text', { x: x - 1, y: 1174, 'text-anchor': 'middle', class: 'axis-time' }, label);
    });

    for (let v = 38200; v >= 37050; v -= 50) {
        const y = Math.round(456 + (37800 - v) * 0.7145) + 0.5;
        if (v % 200 === 0) {
            add(grid, 'path', { d: `M71 ${y}H1988` });
            add(svg, 'text', { x: 68, y: y + 4, 'text-anchor': 'end' }, `${v / 1000 | 0},${v % 1000 || '000'}.0`);
        } else {
            add(grid, 'path', { d: `M${v % 100 === 0 ? 62 : 66} ${y}H71` });
        }
    }

    add(svg, 'path', { d: 'M70 1010.5H1988', stroke: '#8c8c8c' });
    add(svg, 'text', { x: 72, y: 1028, class: 'axis-macd' }, 'MACD');
    [[100, 1045.5], [0, 1087.5], [-100, 1129.5]].forEach(([v, y]) => {
        add(grid, 'path', { d: `M70 ${y}H1988` });
        add(svg, 'text', { x: 68, y: y + 5, 'text-anchor': 'end', class: 'axis-macd' }, String(v));
    });

    // previous close
    add(svg, 'path', { d: 'M70 692.5H150 M156 709.5H1934', stroke: '#4cc24c', fill: 'none' });

    opening.forEach(([x, top, bottom, up]) => {
        candle(svg, x + 0.5, top, bottom, up, top - rnd() * 5, bottom + rnd() * 5);
    });
    let prev = 497;
    for (let x = 560.5; x < 1928; x += STEP) {
        const close = at(closes, x) + (rnd() - 0.5) * 3;
        const top = Math.min(prev, close);
        const bottom = Math.max(prev, close);
        const px = Math.round(x) + 0.5;
        candle(svg, px, Math.round(top), Math.round(bottom) + 2, close < prev, top - rnd() * 4, bottom + 2 + rnd() * 4);
        prev = close;
    }
    candle(svg, 175.5, 440, 446, 1, 416, 448);
    candle(svg, 196.5, 434, 448, 1, 422, 448);
    candle(svg, 292.5, 493, 500, 0, 491, 512);
    candle(svg, 1680.5, 450, 460, 0, 448, 474);
    candle(svg, 1555.5, 495, 498, 0, 490, 501);

    lines.forEach(([color, points, width]) => {
        add(svg, 'polyline', { points: points, fill: 'none', stroke: color, 'stroke-width': width || 1.2, 'stroke-linejoin': 'round' });
    });

    sar.forEach(([above, str]) => {
        const points = parse(str);
        const end = points[points.length - 1][0];
        for (let x = points[0][0]; x <= end; x += STEP) {
            add(svg, 'rect', { x: x - 1, y: at(points, x) - 1, width: 2, height: 2, fill: above ? '#e07060' : '#8ad8f0' });
        }
    });

    // last price
    add(svg, 'path', { d: 'M69 494H1988', stroke: '#dcd8d0', 'stroke-width': 1.4 });
    add(svg, 'rect', { x: 1928, y: 491, width: 5, height: 4, fill: '#f0f060' });
    add(svg, 'path', { d: 'M0 486H63L69 494L63 502H0Z', fill: '#e8dfcc' });
    add(svg, 'text', { x: 3, y: 498, class: 'tag-text' }, '37,747.45');

    bars.forEach(([start, values]) => {
        values.forEach((v, i) => {
            add(svg, 'rect', {
                x: start + i * STEP,
                y: v > 0 ? 1087 - v : 1088,
                width: 4.4,
                height: Math.abs(v),
                fill: v > 0 ? '#a02c90' : '#4a36ac'
            });
        });
    });
    add(svg, 'polyline', { points: macd, fill: 'none', stroke: '#8ccc68', 'stroke-width': 1.2 });
    add(svg, 'polyline', { points: signal, fill: 'none', stroke: '#e0a050', 'stroke-width': 1.2 });
}

// small day charts: y grows downwards, base is the previous close
const sparks = {
    nikkei: { old: 1, gap: 1, base: 36.5, points: '0,8 2,17 4,12 8,14 12,17 18,14 24,18 30,14 34,15 38,11|54,14 62,16 72,17 80,14 88,12 92,12 97,13 100,17' },
    topix: { old: 1, gap: 1, base: 29, points: '0,5 2,15 4,11 10,15 20,17 28,16 34,12 38,9|54,10 70,14 80,12 90,9 96,12 100,17' },
    jpx: { old: 1, gap: 1, base: 33.5, points: '0,8 2,19 4,14 12,18 24,22 34,16 38,14|54,15 70,20 84,15 92,14 100,22' },
    growth: { old: 1, gap: 1, base: 39.5, points: '0,28 6,25 14,22 24,20 32,17 38,17|54,16 70,18 85,20 92,22 100,27' },
    usdjpy: { base: 35, points: '0,37 4,38 12,36 14,35 22,28 30,18 38,16 50,18 62,16 74,17 78,21 84,16 92,11 96,12 100,17' },
    cfd: { base: 12.5, mark: 1, points: '0,29 8,26 20,22 30,15 34,12 50,13 60,14 70,13 72,11 80,9 90,12 98,10' },
    jgb: { base: 37.5, points: '0,27 8,25 13,25 16,36 18,34 20,19 24,32 28,35 38,36 59,39 60,31 63,28 70,27 80,25 85,29 92,27 96,20 100,20' },
    future: { base: 22.5, blue: 1, points: '0,26 3,33 8,30 12,24 15,16 18,18 20,7 28,9 37,14 40,20 44,28 48,35 52,33 58,20 62,37 65,33' },
    vi: { old: 1, base: 10.5, vi: 1, points: '0,42 10,43 20,41 28,46 35,48 48,44 60,42 70,38 80,39 90,41 100,39' },
    nt: { old: 1, flat: 1, base: 31.5, points: '0,22 8,24 20,24 30,24 38,25|54,24 66,24 80,25 90,24 100,24' },
    dollar: { old: 1, flat: 1, base: 30.5, points: '0,20 6,24 14,29 20,24 30,21 38,21|54,24 68,29 72,31 84,31 88,28 100,28' }
};

function drawSpark(svg) {
    const name = svg.dataset.spark;
    const s = sparks[name];
    add(svg, 'rect', { width: 100, height: 50, fill: s.old ? '#e4e4e4' : '#fff' });
    const ticks = s.old ? [45, 91] : [8, 20, 32, 45, 57, 69, 82, 94];
    ticks.forEach(x => add(svg, 'path', { d: `M${x} 0V46`, stroke: '#ddd', 'stroke-width': 0.5 }));
    [11, 31].forEach(y => add(svg, 'path', { d: `M0 ${y}H100`, stroke: '#ccc', 'stroke-width': 0.5 }));
    ticks.forEach(x => add(svg, 'path', { d: `M${x - 2} 47.5H${x + 2}`, stroke: '#999', 'stroke-width': 2, 'stroke-dasharray': '1.5 1' }));

    if (s.mark) {
        add(svg, 'rect', { x: 71, y: 0, width: 27, height: 50, fill: '#f8ec90' });
    }

    const runs = s.points.split('|').map(parse);
    if (s.gap || s.flat) {
        const a = runs[0][runs[0].length - 1];
        const b = runs[1][0];
        add(svg, 'path', { d: `M${a[0]} ${a[1]}L${b[0]} ${b[1]}V${s.base}H${a[0]}Z`, fill: '#c9e4c9' });
    }

    const up = add(svg, 'clipPath', { id: `up-${name}` });
    add(up, 'rect', { width: 100, height: s.base });
    const down = add(svg, 'clipPath', { id: `down-${name}` });
    add(down, 'rect', { y: s.base, width: 100, height: 50 - s.base });

    runs.forEach(run => {
        const first = run[0][0];
        const last = run[run.length - 1][0];
        let line = '';
        for (let x = first; x <= last; x += 1) {
            const y = at(run, x) + (rnd() - 0.5) * (s.base === 37.5 ? 1 : 2.4);
            line += `${line ? 'L' : 'M'}${x} ${y.toFixed(1)}`;
        }
        const area = `${line}V${s.base}H${first}Z`;
        if (s.vi) {
            add(svg, 'path', { d: area, fill: 'url(#fill-vi)' });
            return;
        }
        add(svg, 'path', { d: area, fill: 'url(#fill-up)', opacity: s.flat ? 0.65 : 0.8, 'clip-path': `url(#up-${name})` });
        add(svg, 'path', { d: line, fill: 'none', stroke: '#4c8a4c', 'stroke-width': 0.9, 'clip-path': `url(#up-${name})` });
        add(svg, 'path', { d: area, fill: '#fbd0d0', 'clip-path': `url(#down-${name})` });
        add(svg, 'path', { d: line, fill: 'none', stroke: '#d85050', 'stroke-width': 0.9, 'clip-path': `url(#down-${name})` });
    });

    if (s.old || s.blue) {
        add(svg, 'path', { d: `M${s.flat || s.vi ? 7 : 0} ${s.base}H100`, stroke: '#7484e0' });
    }
}

drawChart();
document.querySelectorAll('[data-spark]').forEach(drawSpark);
```
